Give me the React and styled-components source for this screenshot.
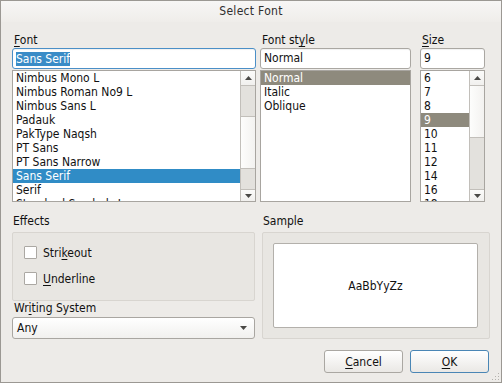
import React from "react";
import styled, { createGlobalStyle } from "styled-components";

const GlobalStyle = createGlobalStyle`
  body {
    margin: 0;
    background: #edebe8;
    font-family: "DejaVu Sans Condensed", "DejaVu Sans", sans-serif;
    font-stretch: condensed;
    font-size: 12px;
    color: #111;
  }
`;

const Window = styled.div`
  width: 502px;
  height: 383px;
  box-sizing: border-box;
  border: 1px solid #9b9893;
  background: #edebe8;
  display: flex;
  flex-direction: column;
  position: relative;
`;

const TitleBar = styled.div`
  height: 21px;
  line-height: 21px;
  text-align: center;
  color: #2e2e2e;
  background: linear-gradient(#f7f6f5, #efedea);
  letter-spacing: 0.3px;
`;

const Body = styled.div`
  padding: 11px 11px 0 11px;
  display: flex;
  flex-direction: column;
`;

const TopGrid = styled.div`
  display: grid;
  grid-template-columns: 244px 151px 70px;
  column-gap: 4px;
  & > div:nth-child(3) {
    margin-left: 5px;
  }
`;

const Column = styled.div`
  display: flex;
  flex-direction: column;
`;

const Label = styled.div`
  height: 15px;
  line-height: 14px;
  padding-left: ${(p) => p.$indent || 2}px;
  white-space: nowrap;
  u {
    text-decoration: underline;
    text-underline-offset: 2px;
  }
`;

const Input = styled.div`
  height: 21px;
  box-sizing: border-box;
  border: 1px solid ${(p) => (p.$focus ? "#4b8fc7" : "#aaa7a2")};
  border-radius: 3px;
  background: #fff;
  box-shadow: inset 0 1px 1px rgba(0, 0, 0, 0.06);
  padding: 0 3px;
  line-height: 19px;
  display: flex;
  align-items: center;
`;

const SelectedText = styled.span`
  background: #3a8cc7;
  color: #fff;
  line-height: 14px;
`;

const ListBox = styled.div`
  margin-top: 1px;
  height: 132px;
  box-sizing: border-box;
  border: 1px solid #a8a5a0;
  background: #fff;
  display: flex;
  overflow: hidden;
`;

const Items = styled.div`
  flex: 1;
  min-width: 0;
  overflow: hidden;
`;

const Item = styled.div`
  height: 14px;
  line-height: 14px;
  padding-left: 3px;
  white-space: nowrap;
  background: ${(p) => (p.$sel === "blue" ? "#308cc6" : p.$sel === "gray" ? "#8e8a7d" : "transparent")};
  color: ${(p) => (p.$sel ? "#fff" : "inherit")};
`;

const ScrollBar = styled.div`
  width: 14px;
  border-left: 1px solid #c2bfba;
  background: #e3e1dd;
  display: flex;
  flex-direction: column;
`;

const ArrowBtn = styled.div`
  height: ${(p) => p.$h}px;
  flex: none;
  background: linear-gradient(#fbfbfa, #f1f0ee);
  border-${(p) => (p.$up ? "bottom" : "top")}: 1px solid #c2bfba;
  display: flex;
  align-items: center;
  justify-content: center;
`;

const Track = styled.div`
  flex: 1;
  position: relative;
  padding-top: ${(p) => p.$offset}px;
`;

const Thumb = styled.div`
  height: ${(p) => p.$h}px;
  box-sizing: border-box;
  background: linear-gradient(90deg, #fdfdfc, #f3f2f0);
  border-top: ${(p) => (p.$atTop ? "none" : "1px solid #c2bfba")};
  border-bottom: 1px solid #c2bfba;
`;

const Tri = ({ up }) => (
  <svg width="7" height="4" viewBox="0 0 7 4">
    <polygon points={up ? "0,4 7,4 3.5,0" : "0,0 7,0 3.5,4"} fill="#4a4946" />
  </svg>
);

const List = ({ items, selected, sel, thumb }) => (
  <ListBox>
    <Items>
      {items.map((it) => (
        <Item key={it} $sel={it === selected ? sel : null}>
          {it}
        </Item>
      ))}
    </Items>
    {thumb && (
      <ScrollBar>
        <ArrowBtn $up $h={14}>
          <Tri up />
        </ArrowBtn>
        <Track $offset={thumb.top}>
          <Thumb $h={thumb.h} $atTop={thumb.top === 0} />
        </Track>
        <ArrowBtn $h={11}>
          <Tri />
        </ArrowBtn>
      </ScrollBar>
    )}
  </ListBox>
);

const BottomGrid = styled.div`
  margin-top: 12px;
  display: grid;
  grid-template-columns: 243px 228px;
  column-gap: 7px;
`;

const GroupLabel = styled(Label)`
  height: 14px;
  margin-bottom: 4px;
  padding-left: 1px;
`;

const GroupBox = styled.div`
  box-sizing: border-box;
  height: ${(p) => p.$h}px;
  border: 1px solid #d8d5d0;
  border-radius: 2px;
  background: #e8e6e2;
`;

const Effects = styled(GroupBox)`
  padding: 13px 0 0 11px;
  display: flex;
  flex-direction: column;
  gap: 13px;
`;

const CheckRow = styled.div`
  display: flex;
  align-items: center;
  gap: 6px;
  height: 13px;
  u {
    text-underline-offset: 2px;
  }
`;

const Box = styled.div`
  width: 13px;
  height: 13px;
  box-sizing: border-box;
  border: 1px solid #aba8a3;
  border-radius: 1px;
  background: #fff;
`;

const SampleBox = styled(GroupBox)`
  padding: 10px 11px 10px 10px;
  display: flex;
`;

const SampleInner = styled.div`
  flex: 1;
  background: #fff;
  border: 1px solid #b3b0ab;
  border-radius: 2px;
  display: flex;
  align-items: center;
  justify-content: center;
  padding-top: 1px;
`;

const Combo = styled.div`
  margin-top: 1px;
  height: 22px;
  box-sizing: border-box;
  border: 1px solid #a9a6a1;
  border-radius: 3px;
  background: linear-gradient(#ffffff, #f1f0ee);
  display: flex;
  align-items: center;
  justify-content: space-between;
  padding: 0 7px 0 4px;
`;

const Buttons = styled.div`
  margin-top: 11px;
  display: flex;
  justify-content: flex-end;
  gap: 7px;
  padding-right: 1px;
`;

const Button = styled.div`
  width: 79px;
  height: 23px;
  box-sizing: border-box;
  border: 1px solid ${(p) => (p.$default ? "#4a86b5" : "#aaa7a2")};
  border-radius: 3px;
  background: linear-gradient(#ffffff, #eae8e5);
  display: flex;
  align-items: center;
  justify-content: center;
  u {
    text-underline-offset: 2px;
  }
`;

const Grip = styled.svg`
  position: absolute;
  right: 1px;
  bottom: 1px;
`;

const fonts = [
  "Nimbus Mono L",
  "Nimbus Roman No9 L",
  "Nimbus Sans L",
  "Padauk",
  "PakType Naqsh",
  "PT Sans",
  "PT Sans Narrow",
  "Sans Serif",
  "Serif",
  "Standard Symbols L",
];

const sizes = ["6", "7", "8", "9", "10", "11", "12", "14", "16", "18"];

export default function App() {
  return (
    <>
      <GlobalStyle />
      <Window>
        <TitleBar>Select Font</TitleBar>
        <Body>
          <TopGrid>
            <Column>
              <Label>
                <u>F</u>ont
              </Label>
              <Input $focus>
                <SelectedText>Sans Serif</SelectedText>
              </Input>
              <List items={fonts} selected="Sans Serif" sel="blue" thumb={{ top: 30, h: 53 }} />
            </Column>
            <Column>
              <Label>
                Font st<u>y</u>le
              </Label>
              <Input>Normal</Input>
              <List items={["Normal", "Italic", "Oblique"]} selected="Normal" sel="gray" />
            </Column>
            <Column>
              <Label>
                <u>S</u>ize
              </Label>
              <Input>9</Input>
              <List items={sizes} selected="9" sel="gray" thumb={{ top: 0, h: 52 }} />
            </Column>
          </TopGrid>
          <BottomGrid>
            <Column>
              <GroupLabel>Effects</GroupLabel>
              <Effects $h={69}>
                <CheckRow>
                  <Box />
                  <span>
                    Stri<u>k</u>eout
                  </span>
                </CheckRow>
                <CheckRow>
                  <Box />
                  <span>
                    <u>U</u>nderline
                  </span>
                </CheckRow>
              </Effects>
              <Label $indent={2}>
                Wr<u>i</u>ting System
              </Label>
              <Combo>
                <span>Any</span>
                <Tri />
              </Combo>
            </Column>
            <Column>
              <GroupLabel>Sample</GroupLabel>
              <SampleBox $h={107}>
                <SampleInner>AaBbYyZz</SampleInner>
              </SampleBox>
            </Column>
          </BottomGrid>
          <Buttons>
            <Button>
              <span>
                <u>C</u>ancel
              </span>
            </Button>
            <Button $default>
              <span>
                <u>O</u>K
              </span>
            </Button>
          </Buttons>
        </Body>
        <Grip width="10" height="10" viewBox="0 0 10 10">
          {[
            [8, 2],
            [5, 5],
            [8, 5],
            [2, 8],
            [5, 8],
            [8, 8],
          ].map(([x, y]) => (
            <rect key={`${x}-${y}`} x={x} y={y} width="1" height="1" fill="#b4b1ac" />
          ))}
        </Grip>
      </Window>
    </>
  );
}
